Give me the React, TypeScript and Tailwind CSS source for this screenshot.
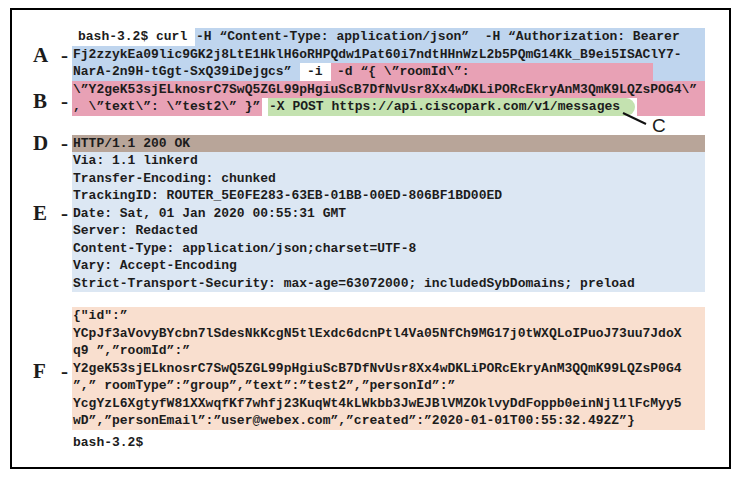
import React from 'react';

const mono = "font-['Liberation_Mono','Courier_New',monospace] font-bold text-[13px] leading-[17.5px] whitespace-pre text-[#1c1c1c]";

const blue = 'bg-[#bfd5ee]';
const pink = 'bg-[#e8a1b5]';
const green = 'bg-[#c4e2b0]';

function Label({ letter }: { letter: string }) {
  return (
    <div className="flex items-center h-[17.5px] font-['Liberation_Serif',serif] font-bold text-[21px] leading-none text-[#1c1c1c]">
      <span className="ml-[21px] w-[28px]">{letter}</span>
      <span>-</span>
    </div>
  );
}

const headers = [
  'Via: 1.1 linkerd',
  'Transfer-Encoding: chunked',
  'TrackingID: ROUTER_5E0FE283-63EB-01BB-00ED-806BF1BD00ED',
  'Date: Sat, 01 Jan 2020 00:55:31 GMT',
  'Server: Redacted',
  'Content-Type: application/json;charset=UTF-8',
  'Vary: Accept-Encoding',
  'Strict-Transport-Security: max-age=63072000; includedSybDomains; preload',
];

const body = [
  '{"id":”',
  'YCpJf3aVovyBYcbn7lSdesNkKcgN5tlExdc6dcnPtl4Va05NfCh9MG17j0tWXQLoIPuoJ73uu7JdoX',
  'q9 ”,”roomId”:”',
  'Y2geK53sjELknosrC7SwQ5ZGL99pHgiuScB7DfNvUsr8Xx4wDKLiPORcEkryAnM3QQmK99LQZsP0G4',
  '”,” roomType”:”group”,”text”:”test2”,”personId”:”',
  'YcgYzL6XgtyfW81XXwqfKf7whfj23KuqWt4kLWkbb3JwEJBlVMZOklvyDdFoppb0einNjl1lFcMyy5',
  'wD”,”personEmail”:”user@webex.com”,”created”:”2020-01-01T00:55:32.492Z”}',
];

export default function App() {
  return (
    <div className="relative w-[742px] h-[478px] bg-white overflow-hidden">
      <div className="ml-[10px] mt-[8px] w-[721px] h-[461px] border-2 border-black pt-[18px]">
        {/* command: A + B */}
        <div className="flex">
          <div className="w-[60px]">
            <div className="h-[52.5px] pt-[19px]"><Label letter="A" /></div>
            <div className="h-[35px] pt-[12px]"><Label letter="B" /></div>
          </div>
          <div className={`w-[633px] ${mono}`}>
            <div className="flex h-[17.5px]">
              <span className="w-[123px] pl-[6px]">bash-3.2$ curl</span>
              <span className={`flex-1 ${blue} pl-[1px]`}>-H “Content-Type: application/json”  -H “Authorization: Bearer</span>
            </div>
            <div className="flex h-[17.5px]">
              <span className={`flex-1 ${blue} pl-[1px]`}>Fj2zzykEa09lic9GK2j8LtE1HklH6oRHPQdw1Pat60i7ndtHHnWzL2b5PQmG14Kk_B9ei5ISAClY7-</span>
            </div>
            <div className="flex h-[17.5px]">
              <span className={`w-[228px] ${blue} pl-[1px]`}>NarA-2n9H-tGgt-SxQ39iDejgcs”</span>
              <span className="w-[31px] pl-[7px]">-i</span>
              <span className={`w-[322px] ${pink} pl-[6px]`}>-d “{'{'} \”roomId\”:</span>
              <span className={`flex-1 ${blue}`} />
            </div>
            <div className="flex h-[17.5px]">
              <span className={`flex-1 ${pink} pl-[1px]`}>\”Y2geK53sjELknosrC7SwQ5ZGL99pHgiuScB7DfNvUsr8Xx4wDKLiPORcEkryAnM3QmK9LQZsPOG4\”</span>
            </div>
            <div className="flex h-[17.5px]">
              <span className={`w-[190px] ${pink} pl-[1px]`}>, \”text\”: \”test2\” {'}'}”</span>
              <span className="w-[6px]" />
              <span className={`w-[367px] ${green} rounded-r-full pl-[1px]`}>-X POST https://api.ciscopark.com/v1/messages</span>
              <span className={`flex-1 ml-[2px] ${pink}`} />
            </div>
          </div>
        </div>

        <div className="h-[19px]" />

        {/* D */}
        <div className="flex">
          <div className="w-[60px]"><Label letter="D" /></div>
          <div className={`w-[633px] h-[17.5px] bg-[#b8a599] pl-[1px] ${mono}`}>HTTP/1.1 200 OK</div>
        </div>

        {/* E */}
        <div className="flex">
          <div className="w-[60px] pt-[52.5px]"><Label letter="E" /></div>
          <div className={`w-[633px] bg-[#dce7f3] pl-[1px] ${mono}`}>
            {headers.map((h) => (
              <div key={h} className="h-[17.5px]">{h}</div>
            ))}
          </div>
        </div>

        <div className="h-[15px]" />

        {/* F */}
        <div className="flex">
          <div className="w-[60px] pt-[56px]"><Label letter="F" /></div>
          <div className={`w-[633px] bg-[#f9dfcf] pl-[1px] ${mono}`}>
            {body.map((b, i) => (
              <div key={i} className="h-[17.5px]">{b}</div>
            ))}
          </div>
        </div>

        <div className="flex mt-[4.5px]">
          <div className="w-[60px]" />
          <div className={`pl-[1px] ${mono}`}>bash-3.2$</div>
        </div>
      </div>

      {/* C annotation */}
      <svg className="absolute left-[615px] top-[105px]" width="40" height="30">
        <line x1="8" y1="8" x2="31" y2="19" stroke="#111" strokeWidth="2" />
      </svg>
      <div className="absolute left-[652px] top-[115px] font-['Liberation_Sans',sans-serif] text-[19px] leading-[22px] text-[#1c1c1c]">C</div>
    </div>
  );
}
